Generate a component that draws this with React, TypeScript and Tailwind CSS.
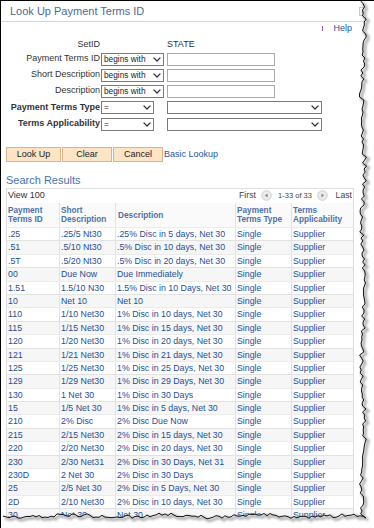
import React from "react";

type Row = { id: string; short: string; desc: string };

const rows: Row[] = [
  { id: ".25", short: ".25/5 Nt30", desc: ".25% Disc in 5 days, Net 30" },
  { id: ".51", short: ".5/10 Nt30", desc: ".5% Disc in 10 days, Net 30" },
  { id: ".5T", short: ".5/20 Nt30", desc: ".5% Disc in 20 days, Net 30" },
  { id: "00", short: "Due Now", desc: "Due Immediately" },
  { id: "1.51", short: "1.5/10 N30", desc: "1.5% Disc in 10 Days, Net 30" },
  { id: "10", short: "Net 10", desc: "Net 10" },
  { id: "110", short: "1/10 Net30", desc: "1% Disc in 10 days, Net 30" },
  { id: "115", short: "1/15 Net30", desc: "1% Disc in 15 days, Net 30" },
  { id: "120", short: "1/20 Net30", desc: "1% Disc in 20 days, Net 30" },
  { id: "121", short: "1/21 Net30", desc: "1% Disc in 21 days, Net 30" },
  { id: "125", short: "1/25 Net30", desc: "1% Disc in 25 Days, Net 30" },
  { id: "129", short: "1/29 Net30", desc: "1% Disc in 29 Days, Net 30" },
  { id: "130", short: "1 Net 30", desc: "1% Disc in 30 Days" },
  { id: "15", short: "1/5 Net 30", desc: "1% Disc in 5 days, Net 30" },
  { id: "210", short: "2% Disc", desc: "2% Disc Due Now" },
  { id: "215", short: "2/15 Net30", desc: "2% Disc in 15 days, Net 30" },
  { id: "220", short: "2/20 Net30", desc: "2% Disc in 20 days, Net 30" },
  { id: "230", short: "2/30 Net31", desc: "2% Disc in 30 Days, Net 31" },
  { id: "230D", short: "2 Net 30", desc: "2% Disc in 30 Days" },
  { id: "25", short: "2/5 Net 30", desc: "2% Disc in 5 Days, Net 30" },
  { id: "2D", short: "2/10 Net30", desc: "2% Disc in 10 days, Net 30" },
  { id: "30", short: "Net 30", desc: "Net 30" },
];

/* ---------- torn paper edge ---------- */

function makeRand(seed: number) {
  let s = seed;
  return () => {
    s = (s * 16807) % 2147483647;
    return s / 2147483647;
  };
}

const rand = makeRand(42);
const tear: [number, number][] = [];
for (let y = 0; y <= 514; y += 3) {
  tear.push([362 + (rand() - 0.5) * 4.5 + Math.sin(y / 21) * 1.4, y]);
}
tear.push([365, 517]);
for (let x = 362; x >= 0; x -= 3) {
  tear.push([x, 515 + (rand() - 0.5) * 3.5 + Math.sin(x / 15) * 1.3]);
}
const tearLine = tear.map(([x, y]) => `${x.toFixed(1)},${y.toFixed(1)}`).join(" ");
const outside = `374,0 ${tearLine} 0,528 374,528`;
const shadowLine = tear.map(([x, y]) => `${(x + 2).toFixed(1)},${(y + 2).toFixed(1)}`).join(" ");

function TornEdge() {
  return (
    <svg className="absolute inset-0 pointer-events-none" width="374" height="528" viewBox="0 0 374 528">
      <defs>
        <filter id="blur" x="-10%" y="-10%" width="120%" height="120%">
          <feGaussianBlur stdDeviation="1.2" />
        </filter>
      </defs>
      <polygon points={outside} fill="#ffffff" />
      <polyline points={shadowLine} fill="none" stroke="#777" strokeWidth="3" opacity="0.55" filter="url(#blur)" />
      <polyline points={tearLine} fill="none" stroke="#111" strokeWidth="1" />
    </svg>
  );
}

/* ---------- form bits ---------- */

function Chevron() {
  return (
    <svg width="8" height="5" viewBox="0 0 8 5" className="shrink-0">
      <polyline points="0.6,0.6 4,4 7.4,0.6" fill="none" stroke="#333" strokeWidth="1.3" />
    </svg>
  );
}

function Select({ className, label }: { className: string; label: string }) {
  return (
    <div
      className={`flex h-[13px] items-center justify-between border border-[#7a7a7a] bg-white pl-[2px] pr-[2px] text-[8.3px] text-[#222] ${className}`}
    >
      <span className="whitespace-nowrap">{label}</span>
      <Chevron />
    </div>
  );
}

function PageArrow({ dir }: { dir: "left" | "right" }) {
  return (
    <svg width="11" height="11" viewBox="0 0 11 11">
      <circle cx="5.5" cy="5.5" r="4.8" fill="#ececec" stroke="#c4c4c4" strokeWidth="0.8" />
      {dir === "left" ? (
        <polygon points="6.6,3.4 6.6,7.6 3.8,5.5" fill="#8a8a8a" />
      ) : (
        <polygon points="4.4,3.4 4.4,7.6 7.2,5.5" fill="#8a8a8a" />
      )}
    </svg>
  );
}

const cols = "grid grid-cols-[52px_56px_120px_56px_63px]";
const cell = "whitespace-nowrap border-l border-[#e2e2e2] pl-[1px]";

export default function App() {
  return (
    <div className="relative h-[528px] w-[374px] overflow-hidden border-l border-t border-black bg-white font-['Liberation_Sans',Arial,sans-serif]">
      {/* title */}
      <div className="flex h-[21px] items-center border-b border-[#d4d4d4] pl-[9px]">
        <span className="text-[11px] text-[#4d6b8f]">Look Up Payment Terms ID</span>
        <div className="ml-auto mr-[6px] flex h-[9px] w-[9px] items-center justify-center border border-[#c8c8c8] bg-[#f2f2f2] text-[7px] leading-none text-[#999]">
          ×
        </div>
      </div>

      {/* help */}
      <div className="flex h-[13px] items-center justify-end pr-[22px]">
        <span className="mr-[10px] h-[5px] w-[1px] bg-[#9a5aa8]" />
        <span className="text-[9px] text-[#2357a0]">Help</span>
      </div>

      {/* criteria */}
      <div className="mt-[3px] flex h-[13px] items-center text-[9px] text-[#333]">
        <div className="w-[99px] text-right">SetID</div>
        <div className="ml-[67px]">STATE</div>
      </div>

      <div className="flex h-[16px] items-center text-[9px] text-[#333]">
        <div className="w-[99px] text-right">Payment Terms ID</div>
        <Select className="ml-[1px] w-[63px]" label="begins with" />
        <div className="ml-[3px] h-[13px] w-[108px] border border-[#aaaaaa]" />
      </div>
      <div className="flex h-[16px] items-center text-[9px] text-[#333]">
        <div className="w-[99px] text-right">Short Description</div>
        <Select className="ml-[1px] w-[63px]" label="begins with" />
        <div className="ml-[3px] h-[13px] w-[108px] border border-[#aaaaaa]" />
      </div>
      <div className="flex h-[16px] items-center text-[9px] text-[#333]">
        <div className="w-[99px] text-right">Description</div>
        <Select className="ml-[1px] w-[63px]" label="begins with" />
        <div className="ml-[3px] h-[13px] w-[108px] border border-[#aaaaaa]" />
      </div>
      <div className="flex h-[17px] items-center text-[9px] text-[#333]">
        <div className="w-[99px] text-right font-bold">Payment Terms Type</div>
        <Select className="ml-[1px] w-[53px]" label="=" />
        <Select className="ml-[13px] w-[155px]" label="" />
      </div>
      <div className="flex h-[16px] items-center text-[9px] text-[#333]">
        <div className="w-[99px] text-right font-bold">Terms Applicability</div>
        <Select className="ml-[1px] w-[53px]" label="=" />
        <Select className="ml-[13px] w-[155px]" label="" />
      </div>

      {/* buttons */}
      <div className="ml-[5px] mt-[15px] flex h-[15px] items-stretch gap-[1px] text-[9px] text-[#222]">
        <button className="w-[55px] border border-[#d9b48c] bg-[#fce4c4]">Look Up</button>
        <button className="w-[50px] border border-[#d9b48c] bg-[#fce4c4]">Clear</button>
        <button className="w-[50px] border border-[#d9b48c] bg-[#fce4c4]">Cancel</button>
        <span className="flex items-center text-[#2357a0]">Basic Lookup</span>
      </div>

      {/* results */}
      <div className="ml-[5px] mt-[12px] h-[13px] text-[11px] leading-[13px] text-[#4574ab]">Search Results</div>

      <div className="ml-[5px] mt-[1px] w-[348px] border-l border-r border-t border-[#dedede]">
        <div className="flex h-[14px] items-center justify-between pl-[1px] pr-[1px] text-[#333]">
          <span className="text-[9px]">View 100</span>
          <div className="flex items-center whitespace-nowrap">
            <span className="w-[17px] text-[8.7px] text-[#444]">First</span>
            <span className="ml-[5px] flex">
              <PageArrow dir="left" />
            </span>
            <span className="ml-[6px] w-[34px] text-center text-[7.5px] text-[#444]">1-33 of 33</span>
            <span className="ml-[5px] flex">
              <PageArrow dir="right" />
            </span>
            <span className="ml-[7px] w-[17px] text-right text-[8.7px] text-[#444]">Last</span>
          </div>
        </div>

        <div className={`${cols} h-[24px] bg-[#fafafa] text-[8.25px] font-bold leading-[9px] text-[#4d72a6]`}>
          <div className="flex items-center pl-[1px]">
            Payment
            <br />
            Terms ID
          </div>
          <div className="flex items-center border-l border-[#e2e2e2] pl-[1px]">
            Short
            <br />
            Description
          </div>
          <div className="flex items-center border-l border-[#e2e2e2] pl-[2px]">Description</div>
          <div className="flex items-center border-l border-[#e2e2e2] pl-[1px]">
            Payment
            <br />
            Terms Type
          </div>
          <div className="flex items-center border-l border-[#e2e2e2] pl-[1px]">
            Terms
            <br />
            Applicability
          </div>
        </div>

        {rows.map((r, i) => (
          <div
            key={r.id}
            className={`${cols} h-[13.4px] border-t text-[8.8px] leading-[12px] text-[#1f4f94] ${
              i % 2 === 1 ? "border-[#e2e2e2] bg-[#f6f6f6]" : "border-[#ececec] bg-white"
            }`}
          >
            <div className="whitespace-nowrap pl-[1px]">{r.id}</div>
            <div className={cell}>{r.short}</div>
            <div className={cell}>{r.desc}</div>
            <div className={cell}>Single</div>
            <div className={cell}>Supplier</div>
          </div>
        ))}
      </div>

      <TornEdge />
    </div>
  );
}
